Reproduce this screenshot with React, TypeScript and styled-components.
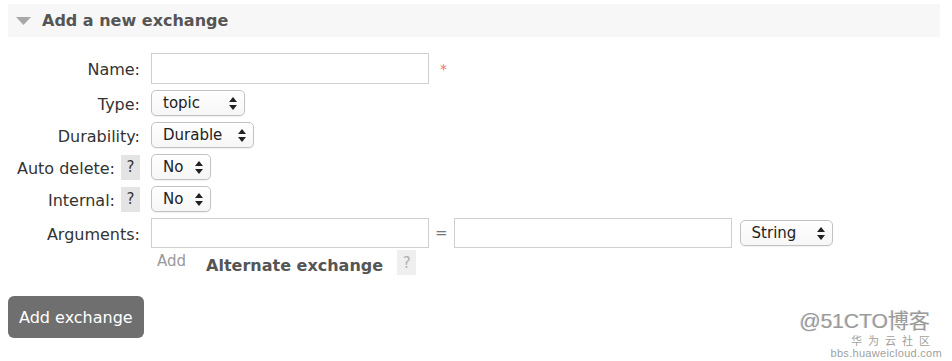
import React from "react";
import styled, { createGlobalStyle } from "styled-components";

const GlobalStyle = createGlobalStyle`
  body {
    margin: 0;
    background: #fff;
    font-family: "DejaVu Sans", Verdana, sans-serif;
    color: #333;
  }
`

const Page = styled.div`
  position: relative;
  width: 952px;
  height: 361px;
  padding-top: 4px;
  box-sizing: border-box;
`

const SectionHeader = styled.div`
  display: flex;
  align-items: center;
  gap: 11px;
  margin: 0 12px 0 8px;
  height: 33px;
  padding-left: 8px;
  background: #f7f7f7;
  font-size: 16px;
  font-weight: bold;
  color: #555;
`

const FormGrid = styled.div`
  display: grid;
  grid-template-columns: 140px auto;
  column-gap: 11px;
  row-gap: 6px;
  align-items: center;
  margin-top: 16px;
`

const Label = styled.div`
  display: flex;
  align-items: center;
  justify-content: flex-end;
  gap: 6px;
  padding-top: 2px;
  font-size: 16px;
  color: #333;
  white-space: nowrap;
`

const Help = styled.span<{ $faint?: boolean }>`
  display: inline-flex;
  align-items: center;
  justify-content: center;
  width: 19px;
  height: 25px;
  margin-top: -2px;
  background: ${p => (p.$faint ? "#efefef" : "#e4e4e4")};
  color: ${p => (p.$faint ? "#b0b0b0" : "#333")};
  font-size: 15px;
`

const Field = styled.div<{ $gap?: number }>`
  display: flex;
  align-items: center;
  gap: ${p => p.$gap ?? 8}px;
`

const TextBox = styled.div<{ $height: number }>`
  width: 278px;
  height: ${p => p.$height}px;
  box-sizing: border-box;
  border: 1px solid #cfcfcf;
  background: #fff;
`

const Required = styled.span`
  margin-left: 3px;
  color: #f07070;
  font-size: 14px;
`

const Equals = styled.span`
  color: #777;
  font-size: 15px;
`

const SelectBox = styled.div<{ $width: number }>`
  display: flex;
  align-items: center;
  justify-content: space-between;
  width: ${p => p.$width}px;
  height: 26px;
  box-sizing: border-box;
  padding: 0 7px 0 11px;
  border: 1px solid #c2c2c2;
  border-radius: 5px;
  background: linear-gradient(#fff, #f6f6f6);
  box-shadow: 0 1px 1px rgba(0, 0, 0, 0.06);
  font-size: 15px;
  color: #222;
`

const ArgSelect = styled.div`
  margin-left: 2px;
`

const AddRow = styled.div`
  display: flex;
  align-items: center;
  height: 25px;
  margin-top: -3px;
  padding-left: 6px;
`

const AddLink = styled.span`
  color: #999;
  font-size: 15px;
  margin-top: -5px;
  margin-right: 20px;
`

const AltLabel = styled.span`
  font-weight: bold;
  font-size: 16px;
  color: #555;
  margin-top: 3px;
  margin-right: 14px;
`

const SubmitButton = styled.button`
  display: block;
  margin: 20px 0 0 8px;
  height: 42px;
  padding: 0 11px;
  border: none;
  border-radius: 6px;
  background: #6f6f6f;
  color: #fff;
  font-family: "DejaVu Sans", Verdana, sans-serif;
  font-size: 16px;
`

const Watermark = styled.div`
  position: absolute;
  right: 10px;
  bottom: 2px;
  display: flex;
  flex-direction: column;
  align-items: flex-end;
  color: #a0a0a0;
  line-height: 1;
`

const WatermarkTitle = styled.div`
  font-family: "Liberation Sans", "Noto Sans CJK SC", sans-serif;
  font-size: 21px;
  color: #9a9a9a;
  text-shadow: 1px 1px 0 #fff, -1px 0 0 #ddd;
  margin-right: 12px;
  margin-bottom: 4px;
`

const WatermarkSub = styled.div`
  font-family: "Noto Sans CJK SC", sans-serif;
  font-size: 11px;
  letter-spacing: 6px;
  margin-right: 6px;
`

const WatermarkUrl = styled.div`
  font-family: "Liberation Sans", sans-serif;
  font-size: 11px;
  letter-spacing: 0.3px;
  margin-top: 2px;
`

const Arrows: React.FC = () => (
  <svg width="8" height="13" viewBox="0 0 8 13">
    <path d="M4 0 L8 5 L0 5 Z" fill="#222" />
    <path d="M0 8 L8 8 L4 13 Z" fill="#222" />
  </svg>
)

const Select: React.FC<{ value: string; width: number }> = ({ value, width }) => (
  <SelectBox $width={width}>
    <span>{value}</span>
    <Arrows />
  </SelectBox>
)

export const App: React.FC = () => {
  return (
    <Page>
      <GlobalStyle />
      <SectionHeader>
        <svg width="15" height="8" viewBox="0 0 15 8">
          <path d="M0 0 L15 0 L7.5 8 Z" fill="#a8a8a8" />
        </svg>
        Add a new exchange
      </SectionHeader>
      <FormGrid>
        <Label>Name:</Label>
        <Field>
          <TextBox $height={31} />
          <Required>*</Required>
        </Field>

        <Label>Type:</Label>
        <Field><Select value="topic" width={94} /></Field>

        <Label>Durability:</Label>
        <Field><Select value="Durable" width={103} /></Field>

        <Label>Auto delete: <Help>?</Help></Label>
        <Field><Select value="No" width={60} /></Field>

        <Label>Internal: <Help>?</Help></Label>
        <Field><Select value="No" width={60} /></Field>

        <Label>Arguments:</Label>
        <Field $gap={6}>
          <TextBox $height={30} />
          <Equals>=</Equals>
          <TextBox $height={30} />
          <ArgSelect><Select value="String" width={93} /></ArgSelect>
        </Field>

        <span />
        <AddRow>
          <AddLink>Add</AddLink>
          <AltLabel>Alternate exchange</AltLabel>
          <Help $faint>?</Help>
        </AddRow>
      </FormGrid>
      <SubmitButton>Add exchange</SubmitButton>
      <Watermark>
        <WatermarkTitle>@51CTO博客</WatermarkTitle>
        <WatermarkSub>华为云社区</WatermarkSub>
        <WatermarkUrl>bbs.huaweicloud.com</WatermarkUrl>
      </Watermark>
    </Page>
  );
}

export default App;
